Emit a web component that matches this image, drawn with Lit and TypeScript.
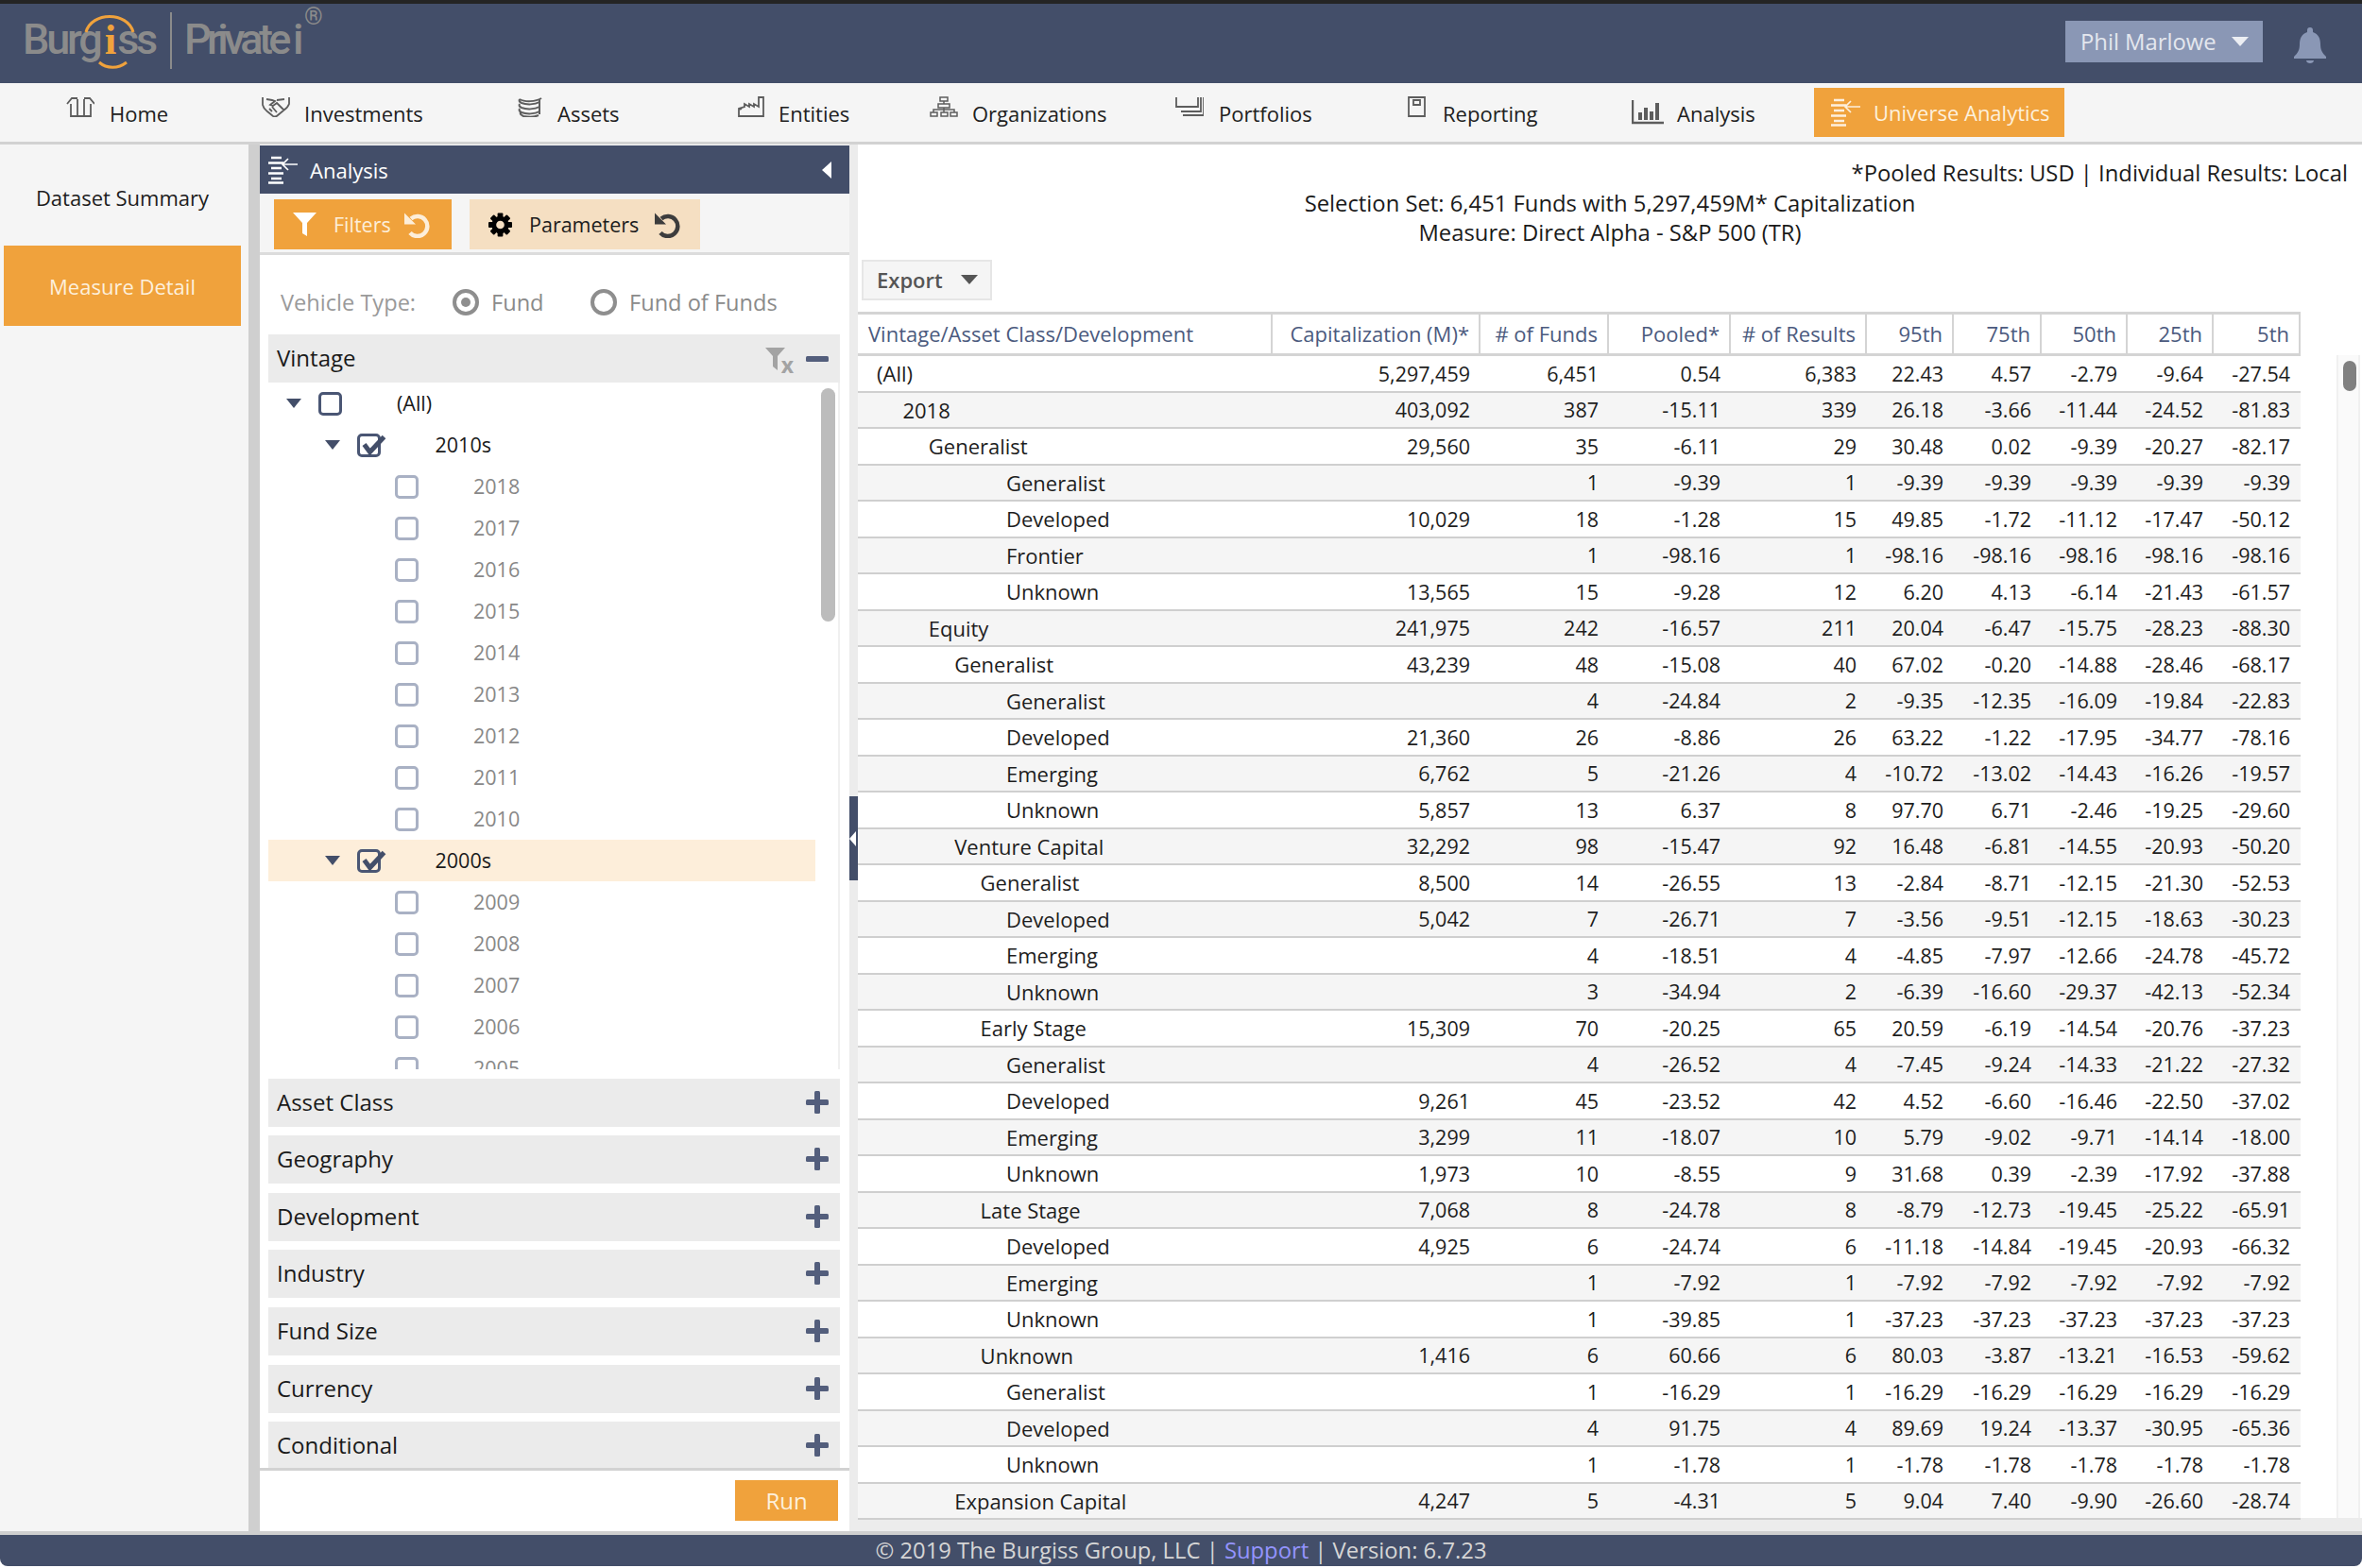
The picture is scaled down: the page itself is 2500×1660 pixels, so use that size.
import { LitElement, html, css, svg } from 'lit';
import { customElement } from 'lit/decorators.js';
import { classMap } from 'lit/directives/class-map.js';

type Row = [number, string, string, string, string, string, string, string, string, string, string];

const same = (v: string) => [v, v, v, v, v] as const;

const ROWS: Row[] = [
  [0, '(All)', '5,297,459', '6,451', '0.54', '6,383', '22.43', '4.57', '-2.79', '-9.64', '-27.54'],
  [1, '2018', '403,092', '387', '-15.11', '339', '26.18', '-3.66', '-11.44', '-24.52', '-81.83'],
  [2, 'Generalist', '29,560', '35', '-6.11', '29', '30.48', '0.02', '-9.39', '-20.27', '-82.17'],
  [5, 'Generalist', '', '1', '-9.39', '1', ...same('-9.39')],
  [5, 'Developed', '10,029', '18', '-1.28', '15', '49.85', '-1.72', '-11.12', '-17.47', '-50.12'],
  [5, 'Frontier', '', '1', '-98.16', '1', ...same('-98.16')],
  [5, 'Unknown', '13,565', '15', '-9.28', '12', '6.20', '4.13', '-6.14', '-21.43', '-61.57'],
  [2, 'Equity', '241,975', '242', '-16.57', '211', '20.04', '-6.47', '-15.75', '-28.23', '-88.30'],
  [3, 'Generalist', '43,239', '48', '-15.08', '40', '67.02', '-0.20', '-14.88', '-28.46', '-68.17'],
  [5, 'Generalist', '', '4', '-24.84', '2', '-9.35', '-12.35', '-16.09', '-19.84', '-22.83'],
  [5, 'Developed', '21,360', '26', '-8.86', '26', '63.22', '-1.22', '-17.95', '-34.77', '-78.16'],
  [5, 'Emerging', '6,762', '5', '-21.26', '4', '-10.72', '-13.02', '-14.43', '-16.26', '-19.57'],
  [5, 'Unknown', '5,857', '13', '6.37', '8', '97.70', '6.71', '-2.46', '-19.25', '-29.60'],
  [3, 'Venture Capital', '32,292', '98', '-15.47', '92', '16.48', '-6.81', '-14.55', '-20.93', '-50.20'],
  [4, 'Generalist', '8,500', '14', '-26.55', '13', '-2.84', '-8.71', '-12.15', '-21.30', '-52.53'],
  [5, 'Developed', '5,042', '7', '-26.71', '7', '-3.56', '-9.51', '-12.15', '-18.63', '-30.23'],
  [5, 'Emerging', '', '4', '-18.51', '4', '-4.85', '-7.97', '-12.66', '-24.78', '-45.72'],
  [5, 'Unknown', '', '3', '-34.94', '2', '-6.39', '-16.60', '-29.37', '-42.13', '-52.34'],
  [4, 'Early Stage', '15,309', '70', '-20.25', '65', '20.59', '-6.19', '-14.54', '-20.76', '-37.23'],
  [5, 'Generalist', '', '4', '-26.52', '4', '-7.45', '-9.24', '-14.33', '-21.22', '-27.32'],
  [5, 'Developed', '9,261', '45', '-23.52', '42', '4.52', '-6.60', '-16.46', '-22.50', '-37.02'],
  [5, 'Emerging', '3,299', '11', '-18.07', '10', '5.79', '-9.02', '-9.71', '-14.14', '-18.00'],
  [5, 'Unknown', '1,973', '10', '-8.55', '9', '31.68', '0.39', '-2.39', '-17.92', '-37.88'],
  [4, 'Late Stage', '7,068', '8', '-24.78', '8', '-8.79', '-12.73', '-19.45', '-25.22', '-65.91'],
  [5, 'Developed', '4,925', '6', '-24.74', '6', '-11.18', '-14.84', '-19.45', '-20.93', '-66.32'],
  [5, 'Emerging', '', '1', '-7.92', '1', ...same('-7.92')],
  [5, 'Unknown', '', '1', '-39.85', '1', ...same('-37.23')],
  [4, 'Unknown', '1,416', '6', '60.66', '6', '80.03', '-3.87', '-13.21', '-16.53', '-59.62'],
  [5, 'Generalist', '', '1', '-16.29', '1', ...same('-16.29')],
  [5, 'Developed', '', '4', '91.75', '4', '89.69', '19.24', '-13.37', '-30.95', '-65.36'],
  [5, 'Unknown', '', '1', '-1.78', '1', ...same('-1.78')],
  [3, 'Expansion Capital', '4,247', '5', '-4.31', '5', '9.04', '7.40', '-9.90', '-26.60', '-28.74'],
];

const HEADERS = ['Vintage/Asset Class/Development', 'Capitalization (M)*', '# of Funds', 'Pooled*', '# of Results', '95th', '75th', '50th', '25th', '5th'];

const YEARS_A = ['2018', '2017', '2016', '2015', '2014', '2013', '2012', '2011', '2010'];
const YEARS_B = ['2009', '2008', '2007', '2006', '2005'];
const SECTIONS = ['Asset Class', 'Geography', 'Development', 'Industry', 'Fund Size', 'Currency', 'Conditional'];

const icon = (w: number, h: number, body: unknown) =>
  html`<svg class="ico" width=${w} height=${h} viewBox="0 0 ${w} ${h}" fill="none" stroke="currentColor" stroke-width="1.8">${body}</svg>`;

const listArrow = (w: number, h: number) =>
  html`<svg class="ico" width=${w} height=${h} viewBox="0 0 32 30" fill="none" stroke="currentColor" stroke-width="2.4">
    <path d="M3 2h11M0 7.500h16M3 13h11M0 18.500h16M3 24h11M0 28.500h16" />
    <path d="M31 9H15M21 3l-6 6 6 6" stroke-width="1.7" />
  </svg>`;

const NAV = [
  { label: 'Home', gap: 16, lift: 14, icon: icon(30, 22, svg`<path d="M5 8v13h21V8M12 21V3M19 21V3M1 8l5-6h6M30 8l-5-6h-6" />`) },
  { label: 'Investments', gap: 15, lift: 14, icon: icon(30, 22, svg`<path d="M1 1v8c1 4 3 5 5 7l6 5c2 1 4 0 5-1l6-5c3-2 5-4 6-7V1M5 3l6 1 3 1-5 4 3 1 4-3 8 8M24 3l-8 1M8 13l3 3M11 11l5 6" />`) },
  { label: 'Assets', gap: 16, lift: 14, icon: icon(26, 22, svg`<path d="M2 3c5 3 17 3 23-1M2 3c-1 2 0 3 2 4 5 2 14 2 19-1M2 8c-1 2 0 3 2 4 5 2 14 2 19-1M2 13c-1 2 0 3 2 4 5 2 14 2 19-1M3 17c-1 2 1 3 3 4 5 1 12 1 16-1M23 3v16" stroke-width="2" />`) },
  { label: 'Entities', gap: 15, lift: 14, icon: icon(28, 22, svg`<path d="M1 21h26V1h-5v10l-5-3v3l-5-3v3l-5-3v3l-6 2zM2 14l2-1" />`) },
  { label: 'Organizations', gap: 15, lift: 14, icon: icon(30, 22, svg`<path d="M11 1h8v4h-8zM9 8h12v4H9zM1 17h7v4H1zM12 17h7v4h-7zM22 17h7v4h-7zM15 5v3M15 12v5M4 17v-3h22v3" stroke-width="1.5" />`) },
  { label: 'Portfolios', gap: 16, lift: 14, icon: icon(30, 22, svg`<path d="M1 1v10h23V1M27 1v15H6M30 1v19H8" />`) },
  { label: 'Reporting', gap: 17, lift: 14, icon: icon(20, 22, svg`<path d="M1 1h17v20H1zM6 4h7v5H6z" />`) },
  { label: 'Analysis', gap: 13, lift: 2, icon: icon(35, 26, svg`<path d="M1 0v24h33" stroke-width="2.400" /><path d="M9 21v-8M15 21V8M21 21v-9M27 21V3" stroke-width="4" />`) },
];

const reset = html`<svg class="ico" width="27" height="28" viewBox="0 0 27 28" fill="none" stroke="currentColor" stroke-width="4.500">
  <path d="M7 7.500a10.500 10.500 0 1 1-1 15" /><path d="M0 1.500v12h12z" fill="currentColor" stroke="none" />
</svg>`;

const gear = html`<svg class="ico" width="25" height="26" viewBox="-13 -13 26 26">
  ${[0, 45, 90, 135, 180, 225, 270, 315].map(a => svg`<rect x="-3" y="-13" width="6" height="7" rx="1" fill="#000" transform="rotate(${a})" />`)}
  <circle r="7" fill="none" stroke="#000" stroke-width="5" />
</svg>`;

const plus = html`<svg class="ico plus" width="24" height="24" viewBox="0 0 24 24" fill="#535e7c"><rect y="9" width="24" height="6" rx="1.500" /><rect x="9" width="6" height="24" rx="1.500" /></svg>`;

@customElement('app-root')
export class AppRoot extends LitElement {
  static styles = css`
    :host {
      display: block;
      width: 2500px;
      height: 1660px;
      overflow: hidden;
      background: #fff;
      font-family: 'Open Sans', sans-serif;
      font-size: 22px;
      color: #1d1d1d;
    }
    * { box-sizing: border-box; }
    .ico { display: block; flex: none; }

    .strip { height: 4px; background: #242424; }
    .head {
      height: 84px;
      background: #434e69;
      display: flex;
      align-items: flex-start;
      padding: 18px 38px 0 0;
      position: relative;
    }
    .logo {
      position: relative;
      width: 345px;
      height: 66px;
      margin-top: -18px;
      display: flex;
      align-items: flex-start;
      padding: 10px 0 0 24px;
      font-family: Roboto, sans-serif;
      font-weight: 500;
      font-size: 45px;
      line-height: 56px;
      color: #8b8b8b;
      letter-spacing: -3.200px;
      white-space: nowrap;
    }
    .logo .mark {
      font-family: 'Liberation Serif', serif;
      font-weight: 700;
      color: #f0a23c;
      letter-spacing: -1px;
      padding: 0 2px 0 5px;
    }
    .logo .bar { width: 2px; height: 60px; background: #8b8b8b; margin: -1px 13px 0 16px; flex: none; }
    .logo .pi { letter-spacing: -4.700px; }
    .logo .reg {
      position: absolute;
      left: 322px;
      top: 0;
      font-size: 25px;
      font-weight: 400;
      line-height: 28px;
      letter-spacing: 0;
    }
    .logo svg { position: absolute; left: 0; top: 0; }
    .user {
      margin-left: auto;
      width: 209px;
      height: 44px;
      background: #8a97b5;
      color: #e4e7ee;
      display: flex;
      align-items: center;
      justify-content: space-between;
      padding: 0 15px 0 16px;
      font-size: 23.800px;
    }
    .user i {
      border-left: 9px solid transparent;
      border-right: 9px solid transparent;
      border-top: 10px solid #eceef3;
    }
    .bell { margin: 7px 0 0 33px; }

    .nav {
      height: 62px;
      background: #f5f5f5;
      padding-left: 70px;
      display: grid;
      grid-template-columns: 207px 271px 233px 203px 260px 246px 237px 193px 265px;
      align-items: center;
    }
    .nav-item { display: flex; align-items: center; color: #202020; height: 100%; padding-top: 2px; }
    .nav-item .ico { color: #5d5d5d; }
    .nav-item.active {
      height: 52px;
      background: #f0a23c;
      color: #fdf0dd;
      padding: 0 0 0 18px;
      gap: 13px;
    }
    .nav-item.active .ico { color: #fdf0dd; }
    .nav-rule { height: 3px; background: #d2d2d2; }

    .main {
      height: 1472px;
      background: #cfcfcf;
      display: grid;
      grid-template-columns: 263px 12px 624px 9px 1592px;
      grid-template-rows: 1468px;
    }
    .side { background: #f5f5f5; padding: 1px 8px 0 4px; }
    .side-item { height: 106px; padding-top: 4px; display: flex; align-items: center; justify-content: center; color: #1d1d1d; }
    .side-item.on { height: 85px; padding-top: 0; background: #f0a23c; color: #fdf0dd; }
    .gutter { background: #cfcfcf; }

    .panel { display: flex; flex-direction: column; background: #fff; height: 1468px; padding-top: 1px; }
    .panel-bar {
      height: 51px;
      flex: none;
      background: #434e69;
      color: #fff;
      display: flex;
      align-items: center;
      gap: 12px;
      padding: 0 19px 0 9px;
    }
    .panel-bar b { margin-left: auto; width: 0; border-top: 9px solid transparent; border-bottom: 9px solid transparent; border-right: 10px solid #fff; }
    .tools {
      height: 65px;
      flex: none;
      background: #f5f5f5;
      border-bottom: 3px solid #dcdcdc;
      padding: 6px 0 0 15px;
      display: flex;
      align-items: flex-start;
      gap: 19px;
    }
    .tool { height: 53px; display: flex; align-items: center; font-size: 21.500px; }
    .tool.filters { width: 188px; background: #f0a23c; color: #fdeed9; padding-left: 20px; }
    .tool.filters .ico { color: #fdeed9; }
    .tool.filters span { margin: 0 14px 0 18px; }
    .tool.filters span.ico { margin: 0; }
    .tool.params { width: 244px; background: #f5dfc2; color: #1c1c1c; padding-left: 20px; }
    .tool.params span { margin: 0 17px 0 18px; }
    .tool.params .reset { color: #3d3d3d; }

    .filters-body { flex: 1; min-height: 0; overflow: hidden; padding: 0 10px 0 9px; }
    .vehicle { height: 84px; display: flex; align-items: center; color: #8a8a8a; padding: 15px 0 0 13px; font-size: 23.600px; }
    .radio { width: 28px; height: 28px; border-radius: 50%; border: 4px solid #8e8e8e; flex: none; display: flex; align-items: center; justify-content: center; }
    .radio.on::after { content: ''; width: 10px; height: 10px; border-radius: 50%; background: #8e8e8e; }
    .vehicle .lbl { width: 182px; color: #9a9a9a; }
    .vehicle .opt { margin-left: 13px; }
    .vehicle .opt.first { width: 105px; }

    .sec {
      height: 51px;
      background: #ebebeb;
      display: flex;
      align-items: center;
      justify-content: space-between;
      padding: 0 12px 0 9px;
      color: #1a1a1a;
      margin-top: 9.600px;
      font-size: 24px;
    }
    .sec.first { margin-top: 0; }
    .sec .name { padding-bottom: 2px; }
    .sec .plus { margin-bottom: 1px; }
    .sec .acts { display: flex; align-items: center; gap: 13px; }
    .minus { width: 24px; height: 6px; border-radius: 1.500px; background: #535e7c; }
    .clear { position: relative; width: 30px; height: 24px; color: #a3a3a3; }
    .clear em { position: absolute; right: 0; bottom: -5px; font-style: normal; font-weight: 700; font-size: 23px; line-height: 22px; }

    .tree { position: relative; height: 727px; overflow: hidden; border-right: 2px solid #f0f0f0; }
    .tree-in { width: 579px; }
    .node { height: 44px; display: flex; align-items: center; color: #888; font-size: 21.500px; }
    .node.branch { color: #1a1a1a; }
    .node.hi { background: #fdeeda; }
    .node .txt { padding-bottom: 2px; }
    .tri { width: 34px; flex: none; }
    .tri i { display: block; width: 0; border-left: 8.500px solid transparent; border-right: 8.500px solid transparent; border-top: 10px solid #434e69; }
    .box { position: relative; width: 25px; height: 25px; flex: none; margin-right: 58px; border: 3px solid #a9b1c4; border-radius: 5px; background: #fff; }
    .node.branch .box { border-color: #4a5674; }
    .node.hi .box { background: transparent; }
    .box svg { position: absolute; left: 2px; top: -6px; }
    .thumb { position: absolute; left: 585px; top: 6px; width: 15px; height: 247px; border-radius: 8px; background: #bcbcbc; }

    .panel-foot { height: 67px; flex: none; border-top: 3px solid #d2d2d2; display: flex; justify-content: flex-end; padding: 10px 12px 0 0; }
    .run { width: 109px; height: 43px; background: #f0a23c; color: #fdf0dd; display: flex; align-items: center; justify-content: center; font-size: 24px; }

    .rail { background: #ececec; position: relative; }
    .handle { position: absolute; left: 0; top: 690px; width: 9px; height: 89px; background: #434e69; }
    .handle::after { content: ''; position: absolute; left: 0; top: 37px; border-top: 8px solid transparent; border-bottom: 8px solid transparent; border-right: 7px solid #fff; }

    .content { display: flex; flex-direction: column; background: #ececec; }
    .page { background: #fff; height: 1454px; display: flex; flex-direction: column; }
    .info { height: 122px; flex: none; padding-top: 15px; text-align: center; line-height: 31.500px; color: #1a1a1a; font-size: 23.800px; }
    .info .r { text-align: right; padding-right: 15px; }
    .export {
      margin-left: 4px;
      width: 138px;
      height: 43px;
      flex: none;
      border: 2px solid #e6e6e6;
      background: #f5f5f5;
      color: #555;
      font-weight: 600;
      display: flex;
      align-items: center;
      justify-content: space-between;
      padding: 0 13px 2px 14px;
      font-size: 22px;
    }
    .export i { border-left: 9px solid transparent; border-right: 9px solid transparent; border-top: 10px solid #555; }
    .gridwrap { margin-top: 12px; flex: 1; min-height: 0; display: flex; }
    .grid { width: 1527px; flex: none; font-size: 21.500px; }
    .row { display: grid; grid-template-columns: 439px 220px 136px 129px 144px 92px 93px 91px 91px 92px; }
    .hrow { height: 47px; border-top: 3px solid #d4d4d4; border-bottom: 3px solid #d4d4d4; color: #4b5a7e; font-size: 22px; }
    .hrow > div { display: flex; align-items: center; justify-content: flex-end; padding: 0 10px 2px 0; border-right: 2px solid #d4d4d4; white-space: nowrap; }
    .hrow > div:first-child { justify-content: flex-start; padding-left: 11px; }
    .drow { height: 38.500px; border-bottom: 2.500px solid #cfcfcf; color: #1d1d1d; }
    .drow.alt { background: #f5f5f5; }
    .drow > div { display: flex; align-items: center; justify-content: flex-end; padding-right: 11px; white-space: nowrap; }
    .drow > div:first-child { justify-content: flex-start; padding-right: 0; font-size: 22px; }
    .track { position: relative; margin: 46px 0 0 38px; width: 25px; border-left: 2px solid #f0f0f0; border-right: 2px solid #f0f0f0; background: #fafafa; flex: none; }
    .track b { position: absolute; left: 5px; top: 6px; width: 14px; height: 32px; border-radius: 7px; background: #808080; }

    .foot {
      height: 33px;
      background: #434e69;
      border-radius: 0 0 8px 8px;
      color: #d6d6d6;
      text-align: center;
      line-height: 32px;
      white-space: pre;
      font-size: 23.800px;
    }
    .foot a { color: #9494ff; }
  `;

  private _node(level: number, label: string, branch: boolean, checked: boolean, hi = false) {
    return html`<div
      class=${classMap({ node: true, branch, hi })}
      style="padding-left:${(branch ? 19 : 53) + 40.5 * level}px"
    >
      ${branch ? html`<span class="tri"><i></i></span>` : ''}
      <span class="box">
        ${checked
          ? html`<svg width="28" height="28" viewBox="0 0 28 28"><path d="M2.500 14.500l6 8 15-16" fill="none" stroke="#434e69" stroke-width="5" /></svg>`
          : ''}
      </span>
      <span class="txt">${label}</span>
    </div>`;
  }

  private _logo() {
    return html`<div class="logo">
      <span>Burg</span><span class="mark">i</span><span>ss</span>
      <span class="bar"></span>
      <span class="pi">Private i</span>
      <span class="reg">®</span>
      <svg width="160" height="76" viewBox="0 0 160 76" fill="none" stroke="#f0a23c" stroke-width="3">
        <path d="M91 30c6-22 44-22 50 0" />
        <path d="M105 62c8 7 20 7 29 0" />
      </svg>
    </div>`;
  }

  render() {
    return html`
      <div class="strip"></div>
      <div class="head">
        ${this._logo()}
        <div class="user"><span>Phil Marlowe</span><i></i></div>
        <svg class="bell" width="34" height="38" viewBox="0 0 34 38" fill="#8a97b5"><path d="M17 0c2 0 3 1 3 3v2c6 2 8 7 8 13 0 6 2 9 6 13v2H0v-2c4-4 6-7 6-13 0-6 2-11 8-13V3c0-2 1-3 3-3zM13 35h8c0 2-2 3-4 3s-4-1-4-3z" /></svg>
      </div>
      <div class="nav">
        ${NAV.map(
          n => html`<div class="nav-item" style="gap:${n.gap}px">
            <span class="ico" style="margin-bottom:${n.lift}px">${n.icon}</span><span>${n.label}</span>
          </div>`
        )}
        <div class="nav-item active">${listArrow(32, 30)}<span>Universe Analytics</span></div>
      </div>
      <div class="nav-rule"></div>
      <div class="main">
        <div class="side">
          <div class="side-item">Dataset Summary</div>
          <div class="side-item on">Measure Detail</div>
        </div>
        <div class="gutter"></div>
        <div class="panel">
          <div class="panel-bar">${listArrow(32, 30)}<span>Analysis</span><b></b></div>
          <div class="tools">
            <div class="tool filters">
              <svg class="ico" width="25" height="25" viewBox="0 0 25 25" fill="#fff"><path d="M0 0h25L15 11v14l-5-3V11z" /></svg>
              <span>Filters</span><span class="ico">${reset}</span>
            </div>
            <div class="tool params">
              ${gear}<span>Parameters</span><div class="reset">${reset}</div>
            </div>
          </div>
          <div class="filters-body">
            <div class="vehicle">
              <span class="lbl">Vehicle Type:</span>
              <span class="radio on"></span><span class="opt first">Fund</span>
              <span class="radio"></span><span class="opt">Fund of Funds</span>
            </div>
            <div class="sec first">
              <span class="name">Vintage</span>
              <span class="acts">
                <span class="clear">
                  <svg class="ico" width="22" height="24" viewBox="0 0 22 24" fill="currentColor"><path d="M0 0h21L13 9v15l-5-4V9z" /></svg>
                  <em>x</em>
                </span>
                <span class="minus"></span>
              </span>
            </div>
            <div class="tree">
              <div class="tree-in">
                ${this._node(0, '(All)', true, false)}
                ${this._node(1, '2010s', true, true)}
                ${YEARS_A.map(y => this._node(2, y, false, false))}
                ${this._node(1, '2000s', true, true, true)}
                ${YEARS_B.map(y => this._node(2, y, false, false))}
              </div>
              <div class="thumb"></div>
            </div>
            ${SECTIONS.map(s => html`<div class="sec"><span class="name">${s}</span>${plus}</div>`)}
          </div>
          <div class="panel-foot"><div class="run">Run</div></div>
        </div>
        <div class="rail"><div class="handle"></div></div>
        <div class="content">
          <div class="page">
            <div class="info">
              <div class="r">*Pooled Results: USD | Individual Results: Local</div>
              <div>Selection Set: 6,451 Funds with 5,297,459M* Capitalization</div>
              <div>Measure: Direct Alpha - S&amp;P 500 (TR)</div>
            </div>
            <div class="export"><span>Export</span><i></i></div>
            <div class="gridwrap">
              <div class="grid">
                <div class="row hrow">${HEADERS.map(h => html`<div>${h}</div>`)}</div>
                ${ROWS.map(
                  ([level, name, ...vals], i) => html`<div class=${classMap({ row: true, drow: true, alt: i % 2 === 1 })}>
                    <div style="padding-left:${20 + level * 27.4}px">${name}</div>
                    ${vals.map(v => html`<div>${v}</div>`)}
                  </div>`
                )}
              </div>
              <div class="track"><b></b></div>
            </div>
          </div>
        </div>
      </div>
      <div class="foot">© 2019 The Burgiss Group, LLC | <a>Support</a> | Version: 6.7.23</div>
    `;
  }
}

declare global {
  interface HTMLElementTagNameMap {
    'app-root': AppRoot;
  }
}
